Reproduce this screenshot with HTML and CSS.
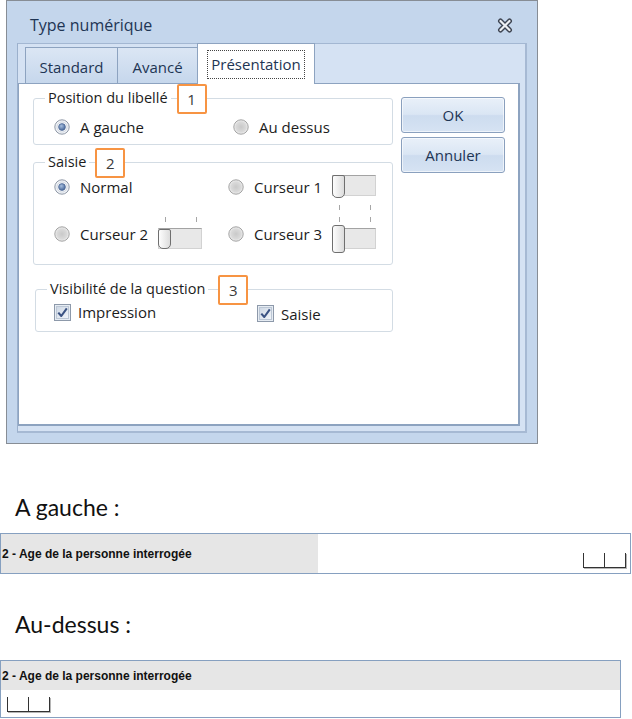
FILE: index.html
```html
<!DOCTYPE html>
<html lang="fr">
<head>
<meta charset="utf-8">
<title>Type numérique</title>
<link rel="stylesheet" href="styles.css">
</head>
<body>
<div class="dialog">
  <div class="titlebar">
    <span class="title">Type numérique</span>
    <svg class="close" viewBox="0 0 16 15" width="16" height="15">
      <path d="M3.5 3 L12.5 12 M12.5 3 L3.5 12" stroke="#3d4451" stroke-width="5" stroke-linecap="round"/>
      <path d="M3.5 3 L12.5 12 M12.5 3 L3.5 12" stroke="#eef0f3" stroke-width="2.2" stroke-linecap="round"/>
    </svg>
  </div>
  <div class="tabctrl">
    <div class="tabs">
      <div class="tab t-std">Standard</div>
      <div class="tab t-adv">Avancé</div>
      <div class="tab t-pres active"><span class="focus">Présentation</span></div>
    </div>
    <div class="panel">
      <div class="groups">
        <fieldset class="group g1">
          <legend>Position du libellé<span class="badge">1</span></legend>
          <div class="opts">
            <label class="opt"><svg class="radio" viewBox="0 0 16 16"><use href="#radio-on"/></svg>A gauche</label>
            <label class="opt"><svg class="radio" viewBox="0 0 16 16"><use href="#radio-off"/></svg>Au dessus</label>
          </div>
        </fieldset>
        <fieldset class="group g2">
          <legend>Saisie<span class="badge">2</span></legend>
          <div class="opts">
            <label class="opt"><svg class="radio" viewBox="0 0 16 16"><use href="#radio-on"/></svg>Normal</label>
            <label class="opt"><svg class="radio" viewBox="0 0 16 16"><use href="#radio-off"/></svg>Curseur 1<span class="slider s1 ticks-below"><span class="thumb"></span></span></label>
            <label class="opt"><svg class="radio" viewBox="0 0 16 16"><use href="#radio-off"/></svg>Curseur 2<span class="slider s2 ticks-above"><span class="thumb"></span></span></label>
            <label class="opt"><svg class="radio" viewBox="0 0 16 16"><use href="#radio-off"/></svg>Curseur 3<span class="slider s3 ticks-above"><span class="thumb"></span></span></label>
          </div>
        </fieldset>
        <fieldset class="group g3">
          <legend>Visibilité de la question<span class="badge b3">3</span></legend>
          <div class="opts">
            <label class="opt chk"><svg class="check" viewBox="0 0 17 17"><use href="#check-on"/></svg>Impression</label>
            <label class="opt chk low"><svg class="check" viewBox="0 0 17 17"><use href="#check-on"/></svg>Saisie</label>
          </div>
        </fieldset>
      </div>
      <div class="buttons">
        <button class="btn">OK</button>
        <button class="btn">Annuler</button>
      </div>
    </div>
  </div>
</div>

<div class="caption">A gauche :</div>
<div class="qbox1">
  <div class="qlabel">2 - Age de la personne interrogée</div>
  <div class="qinput"><div class="digits"><span class="cell"></span><span class="cell"></span></div></div>
</div>

<div class="caption c2">Au-dessus :</div>
<div class="qbox2">
  <div class="qhead">2 - Age de la personne interrogée</div>
  <div class="qbody"><div class="digits"><span class="cell"></span><span class="cell"></span></div></div>
</div>

<svg class="defs" width="0" height="0" aria-hidden="true">
  <defs>
    <radialGradient id="rOff" cx="50%" cy="50%" r="50%">
      <stop offset="0" stop-color="#c9c9c9"/>
      <stop offset="0.7" stop-color="#dadada"/>
      <stop offset="1" stop-color="#f2f2f2"/>
    </radialGradient>
    <radialGradient id="rDot" cx="40%" cy="35%" r="70%">
      <stop offset="0" stop-color="#a8c0e0"/>
      <stop offset="1" stop-color="#3f5f92"/>
    </radialGradient>
    <linearGradient id="cFill" x1="0" y1="0" x2="1" y2="1">
      <stop offset="0" stop-color="#cdd7e4"/>
      <stop offset="1" stop-color="#f3f6fa"/>
    </linearGradient>
    <g id="radio-off">
      <circle cx="8" cy="8" r="7.2" fill="url(#rOff)" stroke="#a3a3a3" stroke-width="1"/>
    </g>
    <g id="radio-on">
      <circle cx="8" cy="8" r="7.2" fill="#eef1f5" stroke="#8f98a6" stroke-width="1"/>
      <circle cx="8" cy="8" r="5" fill="#ffffff" stroke="#c5cdd8" stroke-width="0.8"/>
      <circle cx="8" cy="8" r="3.4" fill="url(#rDot)" stroke="#4f6b98" stroke-width="0.8"/>
    </g>
    <g id="check-on">
      <rect x="0.5" y="0.5" width="16" height="16" fill="#e6ecf3" stroke="#8d99aa"/>
      <rect x="2.5" y="2.5" width="12" height="12" fill="url(#cFill)" stroke="#bcc7d5"/>
      <path d="M4.3 8.6 L7.3 12 L12.8 4.3" fill="none" stroke="#3b5383" stroke-width="2.1" stroke-linejoin="round"/>
    </g>
  </defs>
</svg>
</body>
</html>
```
FILE: styles.css
```css
* { box-sizing: border-box; }
html, body { margin: 0; padding: 0; background: #fff; }
body {
  width: 632px;
  height: 719px;
  overflow: hidden;
  font-family: "Open Sans", "Noto Sans", sans-serif;
  color: #222;
}
.defs { position: absolute; width: 0; height: 0; }

/* ---------- dialog ---------- */
.dialog {
  margin-left: 6px;
  width: 532px;
  height: 444px;
  border: 1px solid #878d95;
  background: #c4d6ec;
  padding: 0 10px 10px 10px;
  display: flex;
  flex-direction: column;
}
.titlebar {
  height: 42px;
  display: flex;
  justify-content: space-between;
  align-items: flex-start;
  flex: none;
}
.title {
  margin: 14px 0 0 13px;
  font-size: 16px;
  line-height: 20px;
  color: #1e3554;
}
.close { margin: 17px 14px 0 0; width: 16px; height: 15px; }

.tabctrl {
  flex: 1;
  display: flex;
  flex-direction: column;
  background: #d5e2f3;
  border-top: 1px solid #a3b7d2;
  border-left: 1px solid #9bb0cc;
  border-right: 2px solid #a6b9d3;
  border-bottom: 2px solid #a6b9d3;
}
.tabs {
  height: 39px;
  flex: none;
  display: flex;
  align-items: flex-end;
  padding-left: 7px;
}
.tab {
  height: 36px;
  border: 1px solid #8da3c0;
  border-right: none;
  border-bottom: none;
  background: linear-gradient(#dbe6f4, #c6d7ec);
  color: #1e3554;
  font-size: 15px;
  display: flex;
  align-items: center;
  justify-content: center;
  padding-top: 2px;
}
.t-std { width: 92px; }
.t-adv { width: 80px; }
.t-pres { width: 118px; border-right: 1px solid #8da3c0; }
.tab.active {
  height: 41px;
  margin-bottom: -1px;
  background: #fff;
  position: relative;
  z-index: 1;
  padding-top: 0;
}
.focus {
  outline: 1px dotted #444;
  line-height: 27px;
  padding: 0 3px;
}

.panel {
  flex: 1;
  margin-right: 5px;
  margin-bottom: 5px;
  background: #fff;
  border: 1px solid #8da3c0;
  border-right-width: 2px;
  border-bottom-width: 2px;
  display: flex;
  gap: 8px;
  padding: 4px 0 0 14px;
}
.groups { width: 360px; display: flex; flex-direction: column; }

.group {
  margin: 0;
  padding: 0 10px;
  border: 1px solid #d3dce4;
  border-radius: 3px;
  min-width: 0;
  font-size: 15px;
}
.group legend {
  position: relative;
  padding: 0 3px;
  margin-left: 1px;
  line-height: 20px;
  font-size: 14.5px;
  color: #1c1c1c;
}
.badge {
  position: absolute;
  left: calc(100% + 6px);
  top: 50%;
  margin-top: -14px;
  width: 30px;
  height: 30px;
  border: 2px solid #f79443;
  border-radius: 2px;
  background: #fff;
  color: #3a3a3a;
  display: flex;
  align-items: center;
  justify-content: center;
  font-size: 15px;
}
.badge.b3 { left: calc(100% + 10px); }

.g1 { padding-top: 9px; padding-bottom: 7px; }
.g2 { margin-top: 7px; padding-top: 5px; padding-bottom: 16px; }
.g3 { margin-top: 14px; margin-left: 2px; padding-top: 3px; padding-bottom: 9px; }

.opts { display: grid; margin-left: 10px; }
.g1 .opts { grid-template-columns: 179px 1fr; grid-template-rows: 20px; }
.g2 .opts { grid-template-columns: 174px 1fr; grid-template-rows: 20px 28px; row-gap: 23px; }
.g3 .opts { grid-template-columns: 203px 1fr; grid-template-rows: 20px; margin-left: 8px; }

.opt {
  display: flex;
  align-items: center;
  gap: 10px;
  color: #1c1c1c;
  white-space: nowrap;
}
.radio { width: 16px; height: 16px; flex: none; }
.opt.chk { gap: 7px; }
.check { width: 17px; height: 17px; flex: none; }
.opt.low { padding-top: 3px; }

/* sliders */
.slider {
  position: relative;
  width: 44px;
  height: 21px;
  background: #e8e8e8;
  border: 1px solid #d2d2d2;
  border-top-color: #a3a3a3;
  flex: none;
}
.s1 { margin-bottom: 3px; }
.s2, .s3 { margin-top: 8px; }
.thumb {
  position: absolute;
  left: -1px;
  width: 13px;
  border: 1px solid #6f6f6f;
  border-radius: 2px 2px 5px 5px;
  background: linear-gradient(to right, #fdfdfd, #dcdcdc);
}
.s1 .thumb { top: -1px; height: 23px; }
.s2 .thumb { top: 0; height: 20px; }
.s3 .thumb { top: -4px; height: 28px; border-radius: 3px; }
.slider::before,
.slider::after {
  content: "";
  position: absolute;
  width: 1px;
  height: 5px;
  background: #a6a6a6;
}
.slider::before { left: 6px; }
.slider::after { left: 37px; }
.ticks-below::before, .ticks-below::after { top: 29px; }
.ticks-above::before, .ticks-above::after { top: -12px; }

/* buttons */
.buttons {
  width: 104px;
  margin-top: 9px;
  display: flex;
  flex-direction: column;
  gap: 4px;
}
.btn {
  height: 36px;
  border: 1px solid #8aa0be;
  border-radius: 3px;
  background: linear-gradient(#e9f0f9, #dae6f4 48%, #cddcef 52%, #d6e3f3);
  box-shadow: inset 0 0 0 1px rgba(255,255,255,0.6);
  color: #1e3554;
  font-family: "Open Sans", "Noto Sans", sans-serif;
  font-size: 15px;
  padding: 0;
}

/* ---------- examples ---------- */
.caption {
  font-family: Lato, "Open Sans", sans-serif;
  font-size: 23px;
  line-height: 26px;
  margin: 50px 0 0 15px;
  color: #111;
}
.caption.c2 { margin-top: 37px; }

.qbox1 {
  margin-top: 13px;
  width: 631px;
  height: 41px;
  border: 1px solid #86a0c0;
  display: flex;
}
.qlabel, .qhead {
  font-family: "Liberation Sans", Arial, sans-serif;
  font-weight: bold;
  font-size: 12px;
  color: #111;
  background: #e6e6e6;
  padding-left: 1px;
  display: flex;
  align-items: center;
}
.qlabel { width: 317px; }
.qinput {
  flex: 1;
  display: flex;
  justify-content: flex-end;
  align-items: flex-end;
  padding: 0 4px 5px 0;
}
.digits { display: flex; box-shadow: 1px 1px 0 #b5b5b5; width: max-content; }
.cell {
  width: 21px;
  height: 15px;
  border-left: 1px solid #333;
  border-bottom: 1px solid #333;
}
.cell:last-child { width: 22px; border-right: 1px solid #333; }

.qbox2 {
  margin-top: 23px;
  width: 621px;
  border: 1px solid #86a0c0;
}
.qhead { height: 29px; }
.qbody { height: 27px; padding: 7px 0 0 6px; }
```
